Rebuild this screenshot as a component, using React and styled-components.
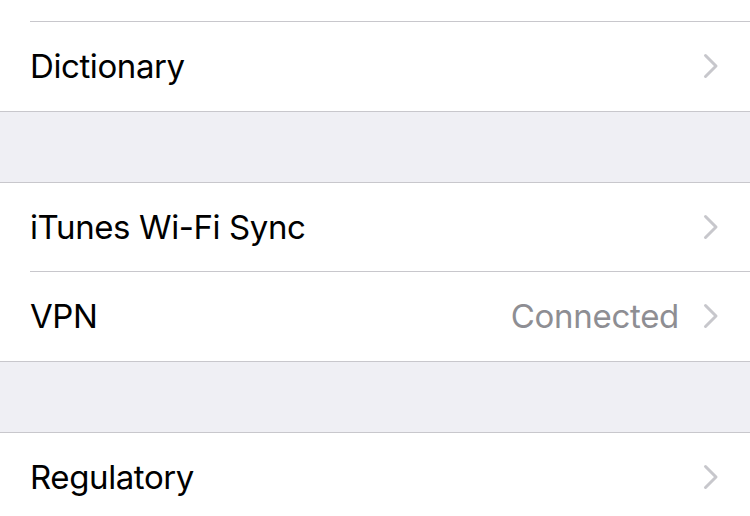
import React from 'react';
import styled, { createGlobalStyle } from 'styled-components';

const GlobalStyle = createGlobalStyle`
  html, body {
    margin: 0;
    padding: 0;
    background: #efeff4;
  }
  body {
    font-family: Inter, "Noto Sans", "Liberation Sans", sans-serif;
    -webkit-font-smoothing: antialiased;
  }
`;

const Page = styled.div`
  width: 750px;
  height: 516px;
  overflow: hidden;
  background: #efeff4;
`;

const Group = styled.section`
  background: #fff;
  border-top: ${props => (props.open ? 'none' : '1px solid #c8c7cc')};
  border-bottom: 1px solid #c8c7cc;
`;

const Spacer = styled.div`
  height: 70px;
`;

const Cell = styled.div`
  display: flex;
  align-items: center;
  height: ${props => props.h || 89}px;
  padding-left: 30px;
  background: #fff;
`;

const CellInner = styled.div`
  flex: 1;
  display: flex;
  align-items: center;
  height: 100%;
  padding-right: 31px;
  padding-bottom: 1px;
  box-sizing: border-box;
  border-bottom: ${props => (props.last ? 'none' : '1px solid #c8c7cc')};
`;

const Title = styled.span`
  flex: 1;
  font-size: 33px;
  letter-spacing: -0.4px;
  color: #000;
`;

const Detail = styled.span`
  font-size: 33px;
  letter-spacing: -0.3px;
  color: #8e8e93;
  margin-right: 24px;
`;

const Chevron = () => (
  <svg width="16" height="26" viewBox="0 0 16 26">
    <path d="M2.5 2.5 L13 13 L2.5 23.5" fill="none" stroke="#c7c7cc" strokeWidth="3" strokeLinecap="round" strokeLinejoin="round" />
  </svg>
);

const Row = ({ title, detail, last, h, noChevron }) => (
  <Cell h={h}>
    <CellInner last={last}>
      <Title>{title}</Title>
      {detail && <Detail>{detail}</Detail>}
      {!noChevron && <Chevron />}
    </CellInner>
  </Cell>
);

export default function App() {
  return (
    <Page>
      <GlobalStyle />
      <Group open>
        <Row h={22} noChevron />
        <Row title="Dictionary" last />
      </Group>
      <Spacer />
      <Group>
        <Row title="iTunes Wi-Fi Sync" />
        <Row title="VPN" detail="Connected" last />
      </Group>
      <Spacer />
      <Group>
        <Row title="Regulatory" last />
      </Group>
    </Page>
  );
}
